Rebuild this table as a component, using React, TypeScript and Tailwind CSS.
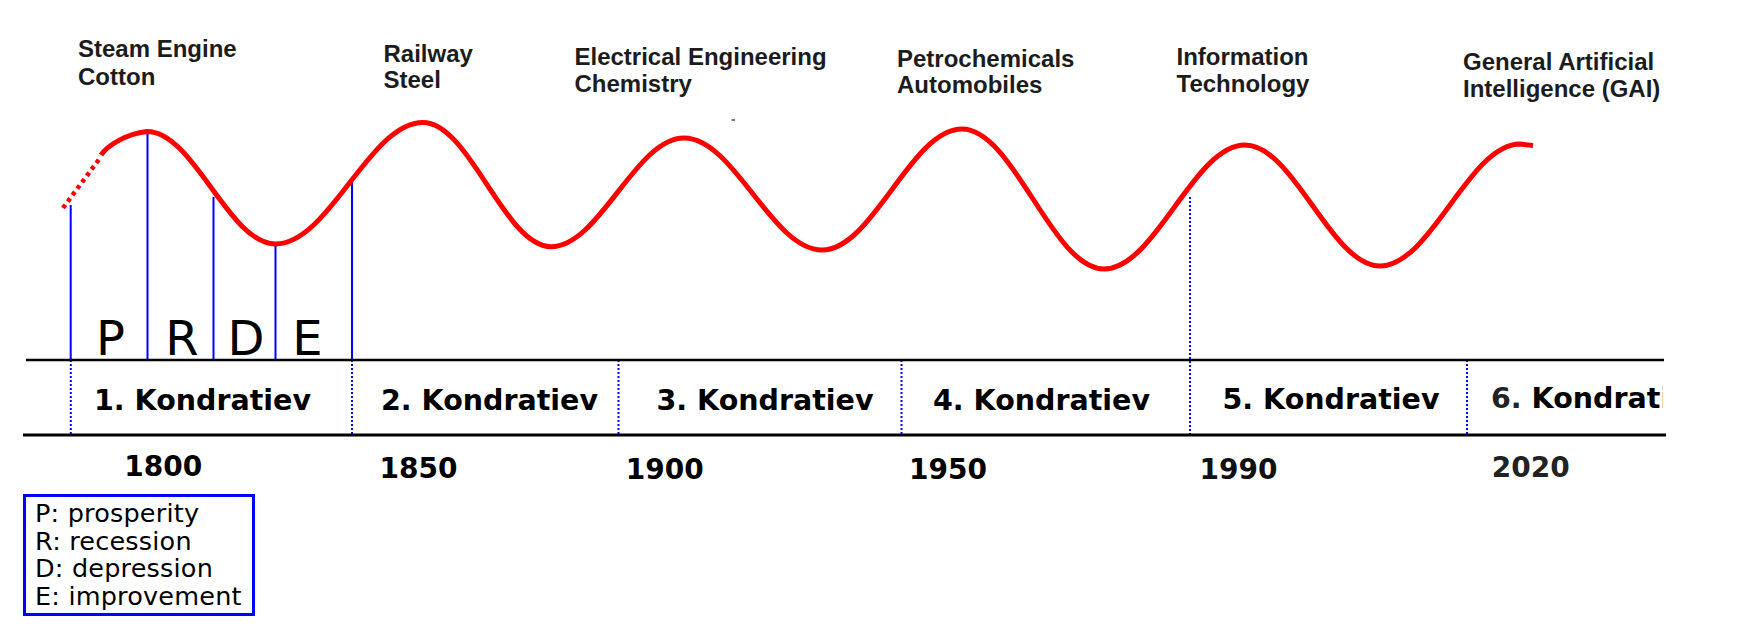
const topLabels = [
  { x: 78, y: 57.3, lines: ['Steam Engine', 'Cotton'], gap: 27.7 },
  { x: 383.5, y: 61.7, lines: ['Railway', 'Steel'], gap: 26.6 },
  { x: 574.5, y: 65, lines: ['Electrical Engineering', 'Chemistry'], gap: 26.7 },
  { x: 897, y: 66.7, lines: ['Petrochemicals', 'Automobiles'], gap: 26.6 },
  { x: 1176.5, y: 65, lines: ['Information', 'Technology'], gap: 26.7 },
  { x: 1463, y: 70, lines: ['General Artificial', 'Intelligence (GAI)'], gap: 26.7 },
];

const waves = [
  { x: 202.5, y: 410, label: '1. Kondratiev' },
  { x: 489.5, y: 410, label: '2. Kondratiev' },
  { x: 765, y: 410, label: '3. Kondratiev' },
  { x: 1041.5, y: 410, label: '4. Kondratiev' },
  { x: 1331, y: 409, label: '5. Kondratiev' },
];

const years = [
  { x: 163.3, y: 476, label: '1800', color: 'fill-black' },
  { x: 418.5, y: 478, label: '1850', color: 'fill-black' },
  { x: 664.7, y: 479, label: '1900', color: 'fill-black' },
  { x: 948, y: 479, label: '1950', color: 'fill-black' },
  { x: 1238.5, y: 479, label: '1990', color: 'fill-[#111111]' },
  { x: 1530.8, y: 476.7, label: '2020', color: 'fill-[#222222]' },
];

// phase markers of the first wave: x, where the wave is hit
const phaseLines = [
  { x: 70.7, top: 205 },
  { x: 147.5, top: 131 },
  { x: 213.5, top: 197 },
  { x: 275.5, top: 244 },
  { x: 352, top: 179 },
];

const bandDividers = [70.8, 352, 618.5, 901.5, 1467];

const phases = [
  { x: 110.5, l: 'P' },
  { x: 182, l: 'R' },
  { x: 246, l: 'D' },
  { x: 307.5, l: 'E' },
];

const wavePath =
  'M 101 155 C 107 146, 125 134, 147 131.5 ' +
  'C 193.8 131.5, 228.7 244, 275.5 244 ' +
  'C 329.2 244, 369.3 122.5, 423 122.5 ' +
  'C 469.6 122.5, 504.4 246.7, 551 246.7 ' +
  'C 599.4 246.7, 635.6 138, 684 138 ' +
  'C 734.2 138, 771.8 250, 822 250 ' +
  'C 873 250, 911 129, 962 129 ' +
  'C 1013.7 129, 1052.3 269, 1104 269 ' +
  'C 1155.3 269, 1193.7 145, 1245 145 ' +
  'C 1294.1 145, 1330.9 266, 1380 266 ' +
  'C 1431 266, 1469 144, 1520 144 ' +
  'L 1533 145.5';

function Chart() {
  return (
    <svg width="1761" height="490" viewBox="0 0 1761 490" className="block">
      <defs>
        <clipPath id="band-end">
          <rect x="1470" y="370" width="192.5" height="60" />
        </clipPath>
      </defs>

      {/* innovation labels */}
      {topLabels.map((t) => (
        <text
          key={t.lines[0]}
          x={t.x}
          y={t.y}
          className="font-['Liberation_Sans',Arial,sans-serif] font-bold text-[24px] fill-[#1c1c1c]"
        >
          <tspan x={t.x}>{t.lines[0]}</tspan>
          <tspan x={t.x} dy={t.gap}>
            {t.lines[1]}
          </tspan>
        </text>
      ))}
      <line x1="731.5" y1="120" x2="735" y2="120" stroke="#222" strokeWidth="1.2" />

      {/* phase lines */}
      {phaseLines.map((p) => (
        <line key={p.x} x1={p.x} y1={p.top} x2={p.x} y2="360" stroke="#0000ff" strokeWidth="2" />
      ))}
      <line x1="1190" y1="197" x2="1190" y2="435" stroke="#0000ff" strokeWidth="2" strokeDasharray="2 2" />
      {bandDividers.map((x) => (
        <line key={x} x1={x} y1="360" x2={x} y2="435" stroke="#0000ff" strokeWidth="2" strokeDasharray="2 2" />
      ))}

      {/* the wave */}
      <line x1="63" y1="208" x2="100" y2="158" stroke="#ff0000" strokeWidth="4.5" strokeDasharray="4 4" />
      <path d={wavePath} fill="none" stroke="#ff0000" strokeWidth="5" strokeLinejoin="round" />

      {phases.map((p) => (
        <text
          key={p.l}
          x={p.x}
          y="355"
          textAnchor="middle"
          className="font-['DejaVu_Sans',Verdana,sans-serif] text-[48px] fill-black"
        >
          {p.l}
        </text>
      ))}

      {/* band */}
      <line x1="26" y1="360" x2="1664" y2="360" stroke="#000" strokeWidth="2.5" />
      <line x1="23" y1="435" x2="1666" y2="435" stroke="#000" strokeWidth="3" />

      {waves.map((w) => (
        <text
          key={w.label}
          x={w.x}
          y={w.y}
          textAnchor="middle"
          className="font-['DejaVu_Sans',Verdana,sans-serif] font-bold text-[28.5px] fill-black"
        >
          {w.label}
        </text>
      ))}
      <text
        x="1491"
        y="408.3"
        clipPath="url(#band-end)"
        className="font-['DejaVu_Sans',Verdana,sans-serif] font-bold text-[28.5px] fill-black"
      >
        <tspan className="fill-[#222222]">6.</tspan> Kondratiev
      </text>

      {years.map((y) => (
        <text
          key={y.label}
          x={y.x}
          y={y.y}
          textAnchor="middle"
          className={
            "font-['DejaVu_Sans',Verdana,sans-serif] font-bold text-[28px] " + y.color
          }
        >
          {y.label}
        </text>
      ))}
    </svg>
  );
}

export default function App() {
  return (
    <div className="w-[1761px] h-[636px] bg-white overflow-hidden">
      <Chart />
      <div className="ml-[23px] mt-[4px] w-[232px] h-[122px] border-[3px] border-[#0000ff] pl-[9px] pt-[3px] font-['DejaVu_Sans',Verdana,sans-serif] text-[25.5px] leading-[27.6px] tracking-[0.2px] text-black">
        <div>P: prosperity</div>
        <div>R: recession</div>
        <div>D: depression</div>
        <div>E: improvement</div>
      </div>
    </div>
  );
}
